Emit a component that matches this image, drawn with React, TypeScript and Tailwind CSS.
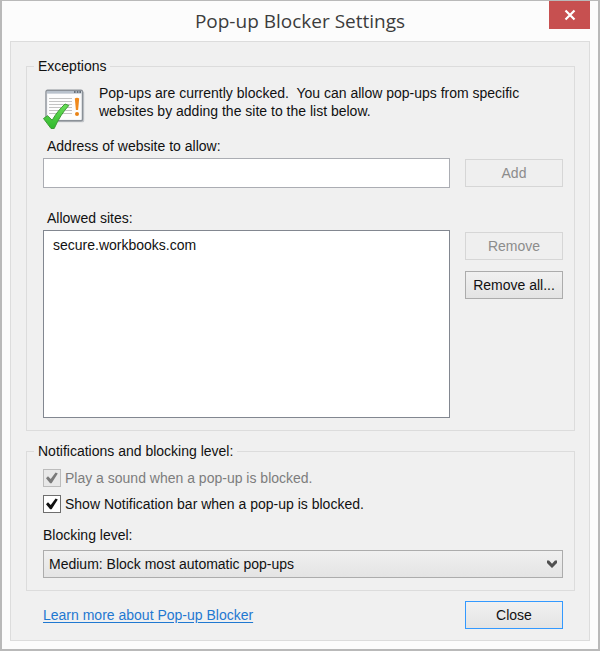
import { useState } from "react";
import type { ButtonHTMLAttributes, ReactNode } from "react";
import clsx from "clsx";

function PopupIcon() {
  return (
    <svg width="42" height="42" viewBox="0 0 42 42" className="block shrink-0" aria-hidden="true">
      <defs>
        <linearGradient id="tick" x1="0" y1="0" x2="0" y2="1">
          <stop offset="0" stopColor="#6be05a" />
          <stop offset="1" stopColor="#2fb82c" />
        </linearGradient>
      </defs>
      <rect x="4.2" y="2.2" width="37" height="31" rx="1.5" fill="#c4c7cb" />
      <rect x="3" y="1.2" width="36.5" height="30.5" rx="1.5" fill="#f4f5f7" stroke="#8b9198" strokeWidth="1.4" />
      <rect x="4" y="2" width="34.5" height="2.6" fill="#b9c2cc" />
      <path d="M31 3h1.6M33.8 3h1.6M36.4 3h1.6" stroke="#4e5760" strokeWidth="1.4" />
      <rect x="5" y="5" width="32.5" height="25" fill="#fdfdfd" />
      <path
        d="M6 9.5h23M6 12.5h23M6 15.5h23M6 18.5h23M6 21.5h23M6 24.5h23"
        stroke="#c3c3c3"
        strokeWidth="1"
      />
      <path d="M31.8 9.5q2.200-1.400 4.400 0l-1.100 11.500h-2.200z" fill="#f08a1d" />
      <circle cx="34" cy="25" r="2" fill="#e98316" />
      <path
        d="M0.500 29.500l4-2.800 4.700 4.500c3.500-6.300 8.300-12 12.800-16.200l3.800 1.500c-5.700 6-10.500 13.800-14.600 23h-3.200z"
        fill="url(#tick)"
        stroke="#3d9a35"
        strokeWidth="1"
        strokeLinejoin="round"
      />
    </svg>
  );
}

function DialogButton({
  className,
  ...props
}: ButtonHTMLAttributes<HTMLButtonElement>) {
  return (
    <button
      type="button"
      className={clsx(
        "h-7 w-full border text-center",
        props.disabled
          ? "border-[#d6d6d6] bg-[#efefef] text-[#8c8c8c]"
          : "bg-linear-to-b from-[#f1f1f1] to-[#e4e4e4] text-[#111]",
        className
      )}
      {...props}
    />
  );
}

function Group({ title, children }: { title: string; children: ReactNode }) {
  return (
    <fieldset className="min-w-0 border border-[#dcdcdc] pr-[11px] pb-3 pl-4">
      <legend className="-ml-[9px] px-1 leading-5">{title}</legend>
      {children}
    </fieldset>
  );
}

function CheckRow({
  label,
  checked,
  disabled,
  onChange,
}: {
  label: string;
  checked: boolean;
  disabled?: boolean;
  onChange?: (v: boolean) => void;
}) {
  return (
    <label className={clsx("flex items-center gap-1", disabled && "text-[#7d7d7d]")}>
      <span className="relative flex">
        <input
          type="checkbox"
          checked={checked}
          disabled={disabled}
          onChange={(e) => onChange?.(e.target.checked)}
          className="size-[18px] appearance-none border border-[#6e6e6e] bg-white disabled:border-[#bcbcbc] disabled:bg-[#e8e8e8]"
        />
        {checked && (
          <svg viewBox="0 0 18 18" className="pointer-events-none absolute inset-0 size-full">
            <path
              d="M3 9.200l2-1.900 2.700 2.700 4.900-6.600 2.200 1-6.200 9.800h-1.500z"
              fill={disabled ? "#7a7a7a" : "#111"}
            />
          </svg>
        )}
      </span>
      {label}
    </label>
  );
}

export default function App() {
  const [address, setAddress] = useState("");
  const [sites, setSites] = useState(["secure.workbooks.com"]);
  const [selected, setSelected] = useState<string[]>([]);
  const [showBar, setShowBar] = useState(true);
  const [level, setLevel] = useState("medium");

  const addSite = () => {
    setSites((prev) => [...prev, address.trim()]);
    setAddress("");
  };

  const removeSites = () => {
    setSites((prev) => prev.filter((s) => !selected.includes(s)));
    setSelected([]);
  };

  return (
    <div className="flex min-h-screen flex-col border-2 border-t-1 border-[#b9b9b9] bg-[#fcfcfc] px-2 pb-2 font-['Liberation_Sans',Arial,sans-serif] text-sm leading-[18px] text-[#111]">
      {/* Title bar */}
      <header className="grid h-10 grid-cols-[1fr_auto_1fr] items-start">
        <h1 className="col-start-2 pt-1.5 font-['Open_Sans',sans-serif] text-[19px] leading-7 text-[#3c3c3c]">
          Pop-up Blocker Settings
        </h1>
        <button
          type="button"
          aria-label="Close window"
          className="flex h-7 w-[41px] items-center justify-center justify-self-end bg-[#c75050]"
        >
          <svg width="12" height="12" viewBox="0 0 12 12">
            <path d="M1.500 1.500l9 9M10.500 1.500l-9 9" stroke="#fff" strokeWidth="2.200" />
          </svg>
        </button>
      </header>

      <main className="flex-1 border border-[#dcdcdc] bg-[#f0f0f0] pt-3.5 pr-3.5 pb-2.5 pl-[15px]">
        <Group title="Exceptions">
          <div className="flex gap-3.5 pt-2">
            <div className="pt-[5px]">
              <PopupIcon />
            </div>
            <p>
              Pop-ups are currently blocked.&nbsp; You can allow pop-ups from specific websites by
              adding the site to the list below.
            </p>
          </div>

          <div className="grid grid-cols-[1fr_98px] gap-x-[15px]">
            <label htmlFor="address" className="col-span-2 mt-1.5 mb-[3px] pl-1">
              Address of website to allow:
            </label>
            <input
              id="address"
              type="text"
              value={address}
              onChange={(e) => setAddress(e.target.value)}
              className="h-[30px] w-full border border-[#abadb3] bg-white px-2 outline-none"
            />
            <DialogButton className="mt-px" disabled={!address.trim()} onClick={addSite}>
              Add
            </DialogButton>

            <label htmlFor="sites" className="col-span-2 mt-[21px] mb-[3px] pl-1">
              Allowed sites:
            </label>
            <select
              id="sites"
              multiple
              size={9}
              value={selected}
              onChange={(e) =>
                setSelected(Array.from(e.target.selectedOptions, (o) => o.value))
              }
              className="h-[188px] w-full appearance-none overflow-hidden border border-[#828790] bg-white py-1 outline-none"
            >
              {sites.map((s) => (
                <option key={s} value={s} className="px-[9px] py-0.5">
                  {s}
                </option>
              ))}
            </select>
            <div className="flex flex-col gap-[11px] pt-0.5">
              <DialogButton disabled={selected.length === 0} onClick={removeSites}>
                Remove
              </DialogButton>
              <DialogButton className="border-[#acacac]" onClick={() => setSites([])}>
                Remove all...
              </DialogButton>
            </div>
          </div>
        </Group>

        <div className="mt-2.5">
          <Group title="Notifications and blocking level:">
            <div className="flex flex-col gap-2 pt-2">
              <CheckRow label="Play a sound when a pop-up is blocked." checked disabled />
              <CheckRow
                label="Show Notification bar when a pop-up is blocked."
                checked={showBar}
                onChange={setShowBar}
              />
            </div>
            <label htmlFor="level" className="mt-[13px] mb-1.5 block">
              Blocking level:
            </label>
            <div className="relative">
              <select
                id="level"
                value={level}
                onChange={(e) => setLevel(e.target.value)}
                className="block h-7 w-full appearance-none border border-[#acacac] bg-linear-to-b from-[#f0f0f0] to-[#e4e4e4] px-[5px] outline-none"
              >
                <option value="high">High: Block all pop-ups</option>
                <option value="medium">Medium: Block most automatic pop-ups</option>
                <option value="low">Low: Allow pop-ups from secure sites</option>
              </select>
              <svg
                viewBox="0 0 10 8"
                className="pointer-events-none absolute top-2.5 right-1.5 h-2 w-2.5"
              >
                <path d="M0 0.500l2 0 3 3.200 3-3.200h2v2.500l-5 5-5-5z" fill="#505050" />
              </svg>
            </div>
          </Group>
        </div>

        <footer className="mt-2.5 flex items-center justify-between pr-3 pl-[17px]">
          <a href="#learn-more" className="text-[#1f78d1] underline underline-offset-2">
            Learn more about Pop-up Blocker
          </a>
          <div className="w-[98px]">
            <DialogButton className="border-[#3399ff]">Close</DialogButton>
          </div>
        </footer>
      </main>
    </div>
  );
}
